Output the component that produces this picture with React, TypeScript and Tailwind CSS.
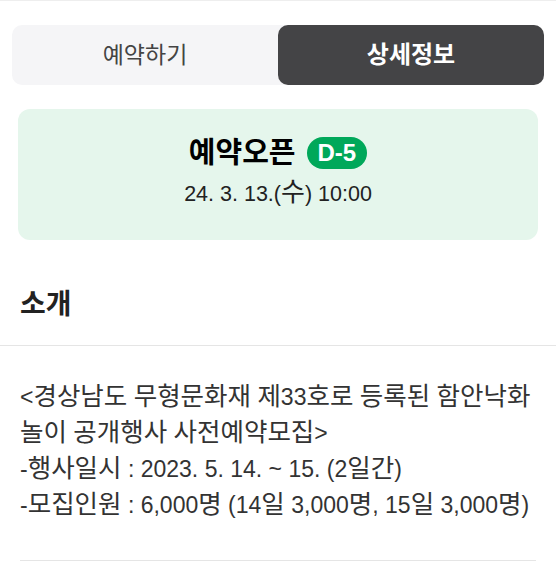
import type { ReactNode } from 'react';

const FONT = 'font-["Liberation_Sans","Noto_Sans_CJK_KR",sans-serif]';
const HANGUL = /([\uAC00-\uD7A3]+)/;

// Hangul in the reference runs wider than the Latin next to it, so it gets its own size
const Ko = ({ text, cls }: { text: string; cls: string }) => {
  const parts: ReactNode[] = text.split(HANGUL).map((part, i) =>
    HANGUL.test(part) ? (
      <span key={i} className={cls}>
        {part}
      </span>
    ) : (
      part
    )
  );
  return <>{parts}</>;
};

const Tabs = () => (
  <div className="mx-3 flex h-[60px] rounded-[10px] bg-[#f5f5f7]">
    <button className="flex flex-1 items-center justify-center text-[23px] text-[#444]">
      예약하기
    </button>
    <button className="flex flex-1 items-center justify-center rounded-[10px] bg-[#444446] text-[24px] font-bold text-white">
      상세정보
    </button>
  </div>
);

const OpenCard = () => (
  <div className="mx-[18px] mt-6 flex h-[131px] flex-col items-center rounded-xl bg-[#e5f6ec] pt-[28px]">
    <div className="flex items-center gap-[11px]">
      <span className="text-[29px] font-bold leading-[32px] text-black">예약오픈</span>
      <span className="flex h-8 items-center rounded-full bg-[#00a85a] px-[11px] text-[24px] font-bold text-white">
        D-5
      </span>
    </div>
    <p className="mt-[10px] text-[21.5px] leading-[28px] text-[#222]">
      <Ko text="24. 3. 13.(수) 10:00" cls="text-[26px] leading-none" />
    </p>
  </div>
);

export default function App() {
  return (
    <div className={`${FONT} min-h-[564px] w-full border-t border-[#eee] bg-white pt-6`}>
      <Tabs />
      <OpenCard />
      <h2 className="mx-5 mt-[49px] pb-[24px] text-[28px] font-bold leading-[32px] text-[#222]">소개</h2>
      <div className="border-t border-[#e5e5e5]" />
      <div className="mx-5 border-b border-[#e5e5e5] pt-[33px] pb-[37px] text-[23px] leading-[36px] text-[#333]">
        <p>
          <Ko text="<경상남도 무형문화재 제33호로 등록된 함안낙화놀이 공개행사 사전예약모집>" cls="text-[25.5px] leading-none" />
        </p>
        <p>
          <Ko text="-행사일시 : 2023. 5. 14. ~ 15. (2일간)" cls="text-[25.5px] leading-none" />
        </p>
        <p>
          <Ko text="-모집인원 : 6,000명 (14일 3,000명, 15일 3,000명)" cls="text-[25.5px] leading-none" />
        </p>
      </div>
    </div>
  );
}
